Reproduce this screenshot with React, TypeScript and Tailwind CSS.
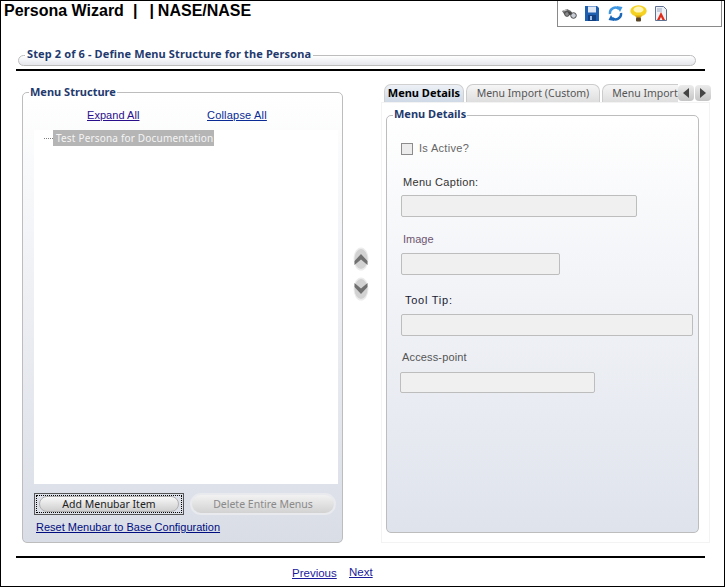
const sans = "font-['Liberation_Sans',Arial,sans-serif]";
const ui = "font-['Noto_Sans','Liberation_Sans',sans-serif]";

function Binoculars() {
  return (
    <svg width="15" height="12" viewBox="0 0 15 12">
      <path d="M0 3 L5 1 L9 3 L10 5 L6 8 L2 6 Z" fill="#6a6a6a" />
      <path d="M1.5 3 L5 1.8" stroke="#cfcfcf" />
      <circle cx="5" cy="6" r="2.4" fill="#8a8a8a" stroke="#3c3c3c" strokeWidth="0.8" />
      <circle cx="11.5" cy="7.5" r="2.8" fill="#c9ced6" stroke="#4a4a4a" strokeWidth="1" />
      <path d="M6 3.5 L10 4.5 L9 7 L7 6.5 Z" fill="#444" />
    </svg>
  );
}
function Floppy() {
  return (
    <svg width="14" height="15" viewBox="0 0 14 15">
      <path d="M0 0H12L14 2V15H0Z" fill="#1f5fb0" />
      <rect x="3" y="0.5" width="8" height="6" fill="#dfe8f4" />
      <rect x="3" y="9" width="8" height="6" fill="#123f80" />
      <rect x="5" y="10" width="2" height="4" fill="#9fc0e8" />
    </svg>
  );
}
function Refresh() {
  return (
    <svg width="15" height="15" viewBox="0 0 15 15" fill="none">
      <path d="M2 8 A5.5 5.5 0 0 1 11 3" stroke="#3f97e2" strokeWidth="2.4" />
      <path d="M8.5 0 L14.5 1 L12 6 Z" fill="#3f97e2" />
      <path d="M13 7 A5.5 5.5 0 0 1 4 12" stroke="#1a66b8" strokeWidth="2.4" />
      <path d="M6.5 15 L0.5 14 L3 9 Z" fill="#1a66b8" />
    </svg>
  );
}
function Bulb() {
  return (
    <svg width="17" height="17" viewBox="0 0 17 17">
      <ellipse cx="8.5" cy="6" rx="8.2" ry="5.8" fill="#f5d21f" />
      <ellipse cx="8.5" cy="4.6" rx="5" ry="3" fill="#fff6b8" />
      <path d="M5 10.5 H12 L10.5 13 H6.5 Z" fill="#d9a514" />
      <rect x="6" y="12.5" width="5" height="4" rx="1" fill="#5a4526" />
    </svg>
  );
}
function Doc() {
  return (
    <svg width="12" height="15" viewBox="0 0 12 15">
      <path d="M0.5 0.5H8.5L11.5 3.5V14.5H0.5Z" fill="#eef1f6" stroke="#5f7193" />
      <path d="M2 3H7M2 5H7" stroke="#9aa8c0" />
      <path d="M6 6 L10 14 H7.5 L6 11 L4.5 14 H2 Z" fill="#e02a1a" />
    </svg>
  );
}
function Chevron({ up }: { up?: boolean }) {
  return (
    <svg width="16" height="24" viewBox="0 0 16 24">
      <ellipse cx="8" cy="12" rx="7.5" ry="11.5" fill="#ececec" />
      <ellipse cx="8" cy="12" rx="6.5" ry="10" fill="#d2d2d2" />
      <path
        d={up ? "M1.5 14 L8 7 L14.5 14 V18 L8 12.5 L1.5 18 Z" : "M1.5 6 L8 11.5 L14.5 6 V10 L8 17 L1.5 10 Z"}
        fill="#707070"
      />
    </svg>
  );
}

const inputCls =
  "block h-[22px] bg-[#f0f0f0] border border-[#bdbdbd] rounded-[2px]";

export default function App() {
  return (
    <div className={`w-[725px] h-[587px] border border-black bg-white overflow-hidden ${sans}`}>
      <div className="flex items-start h-[26px]">
        <div className="ml-[3px] mt-[1px] text-[16px] leading-[18px] font-bold text-black whitespace-pre flex">
          <span>Persona Wizard</span>
          <span className="ml-[9px]">|</span>
          <span className="ml-[12px]">|</span>
          <span className="ml-[4px]">NASE/NASE</span>
        </div>
        <div className="ml-auto mr-[2px] w-[165px] h-[26px] border-x border-b border-[#8a8a8a] flex items-center pl-[4px]">
          <Binoculars />
          <span className="ml-[8px] flex"><Floppy /></span>
          <span className="ml-[9px] flex"><Refresh /></span>
          <span className="ml-[7px] flex"><Bulb /></span>
          <span className="ml-[8px] flex"><Doc /></span>
        </div>
      </div>

      <fieldset className="ml-[17px] mt-[21px] w-[678px] h-[18px] border border-[#bdbdbd] rounded-[6px] bg-gradient-to-b from-[#ffffff] to-[#e4e6ec] p-0 min-w-0">
        <legend className={`ml-[6px] px-[2px] h-[14px] text-[11px] leading-[12px] tracking-[0.12px] font-bold text-[#1f3a6e] ${ui}`}>
          Step 2 of 6 - Define Menu Structure for the Persona
        </legend>
      </fieldset>
      <div className="ml-[15px] mt-[3px] w-[689px] h-[2px] bg-black" />

      <div className="flex mt-[14px] h-[458px]">
        <fieldset className="ml-[21px] w-[321px] h-[458px] border border-[#bdbdbd] rounded-[5px] bg-gradient-to-b from-[#ffffff] to-[#d9dde6] p-0 min-w-0">
          <legend className={`ml-[6px] px-[1px] text-[11px] leading-[14px] font-bold text-[#1f3a6e] ${ui}`}>
            Menu Structure
          </legend>
          <div className="mt-[8px] h-[16px] flex text-[11px] leading-[16px]">
            <a className="ml-[64px] w-[53px] underline text-[#2a0f8c] tracking-[0.05px]">Expand All</a>
            <a className="ml-[67px] underline text-[#0a2a96] tracking-[0.2px]">Collapse All</a>
          </div>
          <div className="ml-[11px] mt-[7px] w-[304px] h-[354px] bg-white flex items-start">
            <div className="ml-[10px] mt-[8px] w-[9px] border-t border-dotted border-[#808080]" />
            <div className={`h-[16px] w-[161px] bg-[#b5b5b5] text-[#f4f4f4] text-[10px] leading-[16px] pl-[3px] tracking-[0.18px] whitespace-nowrap ${ui}`}>
              Test Persona for Documentation
            </div>
          </div>
          <div className="ml-[11px] mt-[9px] flex">
            <div className="w-[150px] h-[22px] border border-[#555] p-[1px]">
              <div className="h-full border border-dotted border-black flex">
                <div className={`flex-1 ml-[2px] mr-[2px] rounded-full border border-[#b0b0b0] bg-gradient-to-b from-[#f8f8f8] to-[#cfcfcf] text-center text-[10.5px] leading-[15px] text-[#222] ${ui}`}>
                  Add Menubar Item
                </div>
              </div>
            </div>
            <div className={`ml-[6px] w-[146px] h-[22px] rounded-full border-2 border-[#e8eaee] bg-gradient-to-b from-[#f2f2f2] to-[#d2d2d2] text-center text-[10.5px] leading-[18px] text-[#8a8a8a] ${ui}`}>
              Delete Entire Menus
            </div>
          </div>
          <div className="ml-[13px] mt-[4px] h-[16px] text-[11px] leading-[16px]">
            <a className="underline text-[#000d80]">Reset Menubar to Base Configuration</a>
          </div>
        </fieldset>

        <div className="w-[38px] flex flex-col items-center pt-[162px] pr-[3px]">
          <Chevron up />
          <div className="mt-[6px] flex"><Chevron /></div>
        </div>

        <div className="w-[330px]">
          <div className={`h-[17px] flex items-end text-[10.5px] ${ui}`}>
            <div className="ml-[3px] w-[80px] h-[18px] rounded-t-[7px] border border-b-0 border-[#d0d0d0] bg-gradient-to-b from-[#eef2f7] to-[#cfd9e6] font-bold text-[11px] text-black text-center leading-[15px]">
              Menu Details
            </div>
            <div className="ml-[2px] w-[135px] h-[18px] rounded-t-[7px] border border-b-0 border-[#cccccc] bg-gradient-to-b from-[#f6f6f6] to-[#dedede] text-[#555] text-center leading-[17px]">
              Menu Import (Custom)
            </div>
            <div className="ml-[2px] w-[76px] h-[18px] rounded-tl-[7px] border-l border-t border-[#cccccc] bg-gradient-to-b from-[#f6f6f6] to-[#dedede] text-[#555] pl-[9px] leading-[17px] whitespace-nowrap">
              Menu Import
            </div>
            <div className="flex mb-[1px]">
              <div className="w-[16px] h-[16px] rounded-[4px] bg-gradient-to-b from-[#ececec] to-[#c4c4c4] flex items-center justify-center">
                <div className="w-0 h-0 border-y-[5px] border-y-transparent border-r-[6px] border-r-[#444]" />
              </div>
              <div className="ml-[1px] w-[16px] h-[16px] rounded-[4px] bg-gradient-to-b from-[#ececec] to-[#c4c4c4] flex items-center justify-center">
                <div className="w-0 h-0 border-y-[5px] border-y-transparent border-l-[6px] border-l-[#444]" />
              </div>
            </div>
          </div>
          <div className="w-[329px] h-[441px] border border-[#f3f3f3] pt-[5px] pl-[4px]">
            <fieldset className="w-[313px] h-[425px] border border-[#bdbdbd] rounded-[5px] bg-gradient-to-b from-[#ffffff] to-[#dfe3ec] p-0 min-w-0">
              <legend className={`ml-[6px] px-[1px] h-[14px] text-[11px] leading-[12px] font-bold text-[#1f3a6e] ${ui}`}>
                Menu Details
              </legend>
              <div className="ml-[14px] mt-[20px] h-[13px] flex items-center">
                <div className="w-[12px] h-[12px] border border-[#8c8c8c] bg-[#ececec]" />
                <span className="ml-[6px] text-[11px] tracking-[0.3px] text-[#666]">Is Active?</span>
              </div>
              <div className="ml-[16px] mt-[20px] h-[14px] text-[11px] leading-[14px] tracking-[0.3px] text-[#333]">Menu Caption:</div>
              <input disabled className={`${inputCls} ml-[14px] mt-[6px] w-[236px]`} />
              <div className="ml-[16px] mt-[15px] h-[14px] text-[11px] leading-[14px] text-[#6d5570]">Image</div>
              <input disabled className={`${inputCls} ml-[14px] mt-[7px] w-[159px]`} />
              <div className="ml-[18px] mt-[18px] h-[14px] text-[11px] leading-[14px] tracking-[0.75px] text-[#1a1a33]">Tool Tip:</div>
              <input disabled className={`${inputCls} ml-[14px] mt-[7px] w-[292px]`} />
              <div className="ml-[15px] mt-[14px] h-[14px] text-[11px] leading-[14px] tracking-[0.15px] text-[#555]">Access-point</div>
              <input disabled className={`${inputCls} ml-[13px] mt-[8px] w-[195px] !h-[21px]`} />
            </fieldset>
          </div>
        </div>
      </div>

      <div className="ml-[15px] mt-[13px] w-[689px] h-[2px] bg-black" />
      <div className="flex mt-[6px] text-[11.5px] leading-[16px]">
        <a className="ml-[291px] mt-[1px] w-[44px] underline text-[#1a1a9c]">Previous</a>
        <a className="ml-[13px] underline text-[#1a1a9c]">Next</a>
      </div>
    </div>
  );
}
